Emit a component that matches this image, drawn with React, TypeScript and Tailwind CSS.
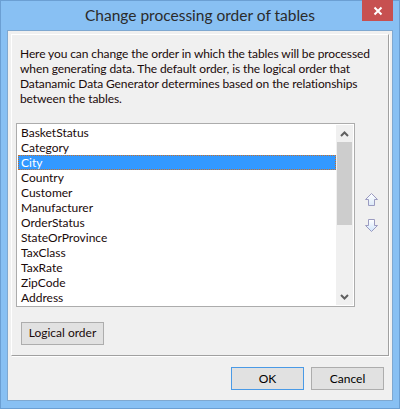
import React from 'react';

const tables = [
  'BasketStatus',
  'Category',
  'City',
  'Country',
  'Customer',
  'Manufacturer',
  'OrderStatus',
  'StateOrProvince',
  'TaxClass',
  'TaxRate',
  'ZipCode',
  'Address',
];

const ArrowIcon: React.FC<{ down?: boolean }> = ({ down }) => (
  <svg width="13" height="13" viewBox="0 0 13 13" className={down ? 'rotate-180' : ''}>
    <defs>
      <linearGradient id={down ? 'gd' : 'gu'} x1="0" y1="0" x2="0" y2="1">
        <stop offset="0" stopColor={down ? '#cfe4fb' : '#ffffff'} />
        <stop offset="1" stopColor={down ? '#ffffff' : '#dbe9f8'} />
      </linearGradient>
    </defs>
    <path
      d="M6.5 0.5 L12.5 6.5 L9.5 6.5 L9.5 12.5 L3.5 12.5 L3.5 6.5 L0.5 6.5 Z"
      fill={`url(#${down ? 'gd' : 'gu'})`}
      stroke="#9b9bc0"
      strokeWidth="1"
    />
  </svg>
);

export default function App() {
  const selected = 'City';

  return (
    <div
      className="w-[400px] h-[409px] bg-[#88c0f3] border border-[#6b9fd3] flex flex-col text-black"
      style={{ fontFamily: 'Lato, "Liberation Sans", sans-serif' }}
    >
      {/* Title bar */}
      <div className="relative h-[29px] shrink-0 flex items-center justify-center">
        <span className="text-[15.5px] text-[#2b2b2b] mt-[1px]">
          Change processing order of tables
        </span>
        <div className="absolute right-[6px] top-[-1px] w-[31px] h-[21px] bg-[#c75050] flex items-center justify-center">
          <svg width="10" height="10" viewBox="0 0 10 10">
            <path d="M1.5 1.5 L8.5 8.5 M8.5 1.5 L1.5 8.5" stroke="#fff" strokeWidth="2" />
          </svg>
        </div>
      </div>

      {/* Client area */}
      <div className="mx-[6px] mb-[7px] flex-1 bg-[#f0f0f0] border border-[#7fa8d0] flex flex-col px-[3px] pt-[3px]">
        <div className="h-[322px] border-t border-l border-white border-r border-b border-r-[#a0a0a0] border-b-[#a0a0a0] shadow-[1px_1px_0_#ffffff] flex flex-col">
          <p className="text-[12px] leading-[15px] tracking-[-0.1px] pl-[8px] pr-[4px] pt-[11px] text-[#1a0a0a]">
            Here you can change the order in which the tables will be processed when generating data. The default order, is the logical order that Datanamic Data Generator determines based on the relationships between the tables.
          </p>

          <div className="flex items-start mt-[17px] pl-[4px]">
            <div className="w-[339px] h-[184px] border border-[#acacac] bg-white flex p-[1px]">
              <ul className="flex-1 text-[12px]">
                {tables.map((t) => (
                  <li
                    key={t}
                    className={
                      t === selected
                        ? 'h-[15px] leading-[13px] pl-[2px] bg-[#3399ff] text-white border border-dotted border-[#c8702a]'
                        : 'h-[15px] leading-[15px] pl-[3px] text-[#1a0a0a]'
                    }
                  >
                    {t}
                  </li>
                ))}
              </ul>
              <div className="w-[17px] bg-[#f0f0f0] flex flex-col items-center">
                <div className="h-[17px] flex items-center justify-center">
                  <svg width="9" height="6" viewBox="0 0 9 6">
                    <path d="M1 5 L4.5 1.5 L8 5" stroke="#606060" strokeWidth="2" fill="none" />
                  </svg>
                </div>
                <div className="w-[15px] h-[83px] bg-[#cdcdcd]" />
                <div className="flex-1" />
                <div className="h-[17px] flex items-center justify-center">
                  <svg width="9" height="6" viewBox="0 0 9 6">
                    <path d="M1 1 L4.5 4.5 L8 1" stroke="#606060" strokeWidth="2" fill="none" />
                  </svg>
                </div>
              </div>
            </div>
            <div className="flex flex-col gap-[13px] ml-[10px] mt-[70px]">
              <ArrowIcon />
              <ArrowIcon down />
            </div>
          </div>

          <div className="pl-[9px] mt-[12px]">
            <button className="w-[83px] h-[23px] border border-[#adadad] bg-[#e1e1e1] text-[12px] text-[#1a0a0a]">
              Logical order
            </button>
          </div>
        </div>

        <div className="flex justify-end gap-[7px] mt-[11px] pr-[5px]">
          <button className="w-[73px] h-[23px] border border-[#4a9ae6] bg-[#e1e1e1] text-[12px]">OK</button>
          <button className="w-[73px] h-[23px] border border-[#adadad] bg-[#e1e1e1] text-[12px]">Cancel</button>
        </div>
      </div>
    </div>
  );
}
